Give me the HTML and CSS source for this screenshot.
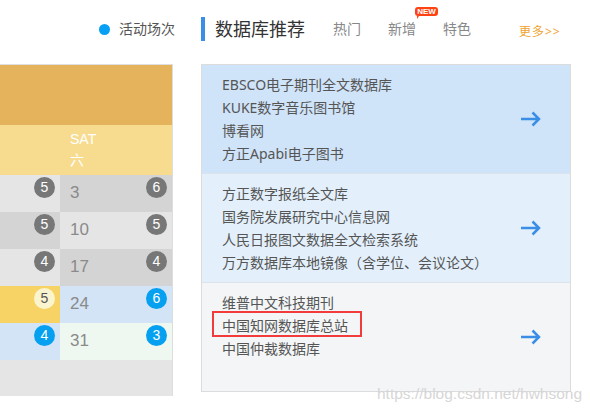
FILE: index.html
```html
<!DOCTYPE html>
<html lang="zh-CN">
<head>
<meta charset="utf-8">
<title>数据库推荐</title>
<link rel="stylesheet" href="styles.css">
</head>
<body>
<div class="page">
  <header class="top">
    <div class="top-left">
      <span class="dot"></span>
      <span class="act">活动场次</span>
    </div>
    <div class="top-right">
      <h2 class="title">数据库推荐</h2>
      <nav class="tabs">
        <a class="tab">热门</a>
        <a class="tab tab-new">新增<span class="badge-new">NEW</span></a>
        <a class="tab">特色</a>
      </nav>
      <a class="more">更多&gt;&gt;</a>
    </div>
  </header>

  <main class="main">
    <section class="cal">
      <div class="cal-head"></div>
      <div class="cal-days">
        <div class="day-cell"></div>
        <div class="day-cell day-name">SAT<br>六</div>
      </div>
      <div class="cal-grid">
        <div class="cell c-light"><span class="b b-gray">5</span></div>
        <div class="cell c-dark"><span class="num">3</span><span class="b b-gray">6</span></div>

        <div class="cell c-dark"><span class="b b-gray">5</span></div>
        <div class="cell c-light"><span class="num">10</span><span class="b b-gray">5</span></div>

        <div class="cell c-light"><span class="b b-gray">4</span></div>
        <div class="cell c-dark"><span class="num">17</span><span class="b b-gray">4</span></div>

        <div class="cell c-yellow"><span class="b b-pale">5</span></div>
        <div class="cell c-blue"><span class="num">24</span><span class="b b-blue">6</span></div>

        <div class="cell c-blue"><span class="b b-blue">4</span></div>
        <div class="cell c-green"><span class="num">31</span><span class="b b-blue">3</span></div>
      </div>
      <div class="cal-foot"></div>
    </section>

    <section class="panel">
      <div class="block block-1">
        <ul class="list">
          <li>EBSCO电子期刊全文数据库</li>
          <li>KUKE数字音乐图书馆</li>
          <li>博看网</li>
          <li>方正Apabi电子图书</li>
        </ul>
        <svg class="arrow" width="20" height="16" viewBox="0 0 20 16"><path d="M0 8H18M11.5 1.5L18 8L11.5 14.5" fill="none" stroke="#3a8ee6" stroke-width="2.5"/></svg>
      </div>
      <div class="block block-2">
        <ul class="list">
          <li>方正数字报纸全文库</li>
          <li>国务院发展研究中心信息网</li>
          <li>人民日报图文数据全文检索系统</li>
          <li>万方数据库本地镜像（含学位、会议论文）</li>
        </ul>
        <svg class="arrow" width="20" height="16" viewBox="0 0 20 16"><path d="M0 8H18M11.5 1.5L18 8L11.5 14.5" fill="none" stroke="#3a8ee6" stroke-width="2.5"/></svg>
      </div>
      <div class="block block-3">
        <ul class="list">
          <li>维普中文科技期刊</li>
          <li><span class="hl">中国知网数据库总站</span></li>
          <li>中国仲裁数据库</li>
        </ul>
        <svg class="arrow" width="20" height="16" viewBox="0 0 20 16"><path d="M0 8H18M11.5 1.5L18 8L11.5 14.5" fill="none" stroke="#3a8ee6" stroke-width="2.5"/></svg>
      </div>
    </section>
  </main>

  <div class="watermark">https://blog.csdn.net/hwhsong</div>
</div>
</body>
</html>
```

FILE: styles.css
```css
* { box-sizing: border-box; }

html, body {
  margin: 0;
  padding: 0;
  background: #fff;
}

body {
  font-family: "Noto Sans", "Noto Sans CJK SC", sans-serif;
  color: #555;
}

.page {
  position: relative;
  width: 594px;
  height: 413px;
  overflow: hidden;
}

/* ---------- header ---------- */
.top {
  display: flex;
  align-items: center;
  height: 58px;
}

.top-left {
  width: 175px;
  display: flex;
  align-items: center;
  justify-content: flex-end;
}

.dot {
  width: 11px;
  height: 11px;
  border-radius: 50%;
  background: #08a0f4;
  margin-right: 9px;
}

.act {
  font-size: 14px;
  line-height: 20px;
  color: #555;
}

.top-right {
  margin-left: 26px;
  display: flex;
  align-items: center;
}

.title {
  margin: 0;
  border-left: 4px solid #3a8ee6;
  padding-left: 10px;
  font-size: 18px;
  line-height: 24px;
  font-weight: normal;
  color: #333;
}

.tabs {
  display: flex;
  align-items: center;
  margin-left: 28px;
  gap: 27px;
}

.tab {
  position: relative;
  font-size: 14px;
  line-height: 20px;
  color: #888;
}

.badge-new {
  position: absolute;
  left: 27px;
  top: -12px;
  width: 23px;
  height: 9px;
  border-radius: 3px;
  background: #ff4214;
  color: #fff;
  font-family: "Liberation Sans", Arial, sans-serif;
  font-weight: bold;
  font-size: 8px;
  line-height: 9px;
  text-align: center;
}

.badge-new::after {
  content: "";
  position: absolute;
  left: 2px;
  bottom: -3px;
  border-left: 2px solid #ff4214;
  border-right: 2px solid transparent;
  border-bottom: 3px solid transparent;
}

.more {
  margin-left: 48px;
  padding-top: 6px;
  font-size: 12px;
  line-height: 16px;
  color: #f0a22e;
  letter-spacing: 1px;
}

/* ---------- main ---------- */
.main {
  display: flex;
  align-items: flex-start;
  margin-top: 6px;
}

/* calendar */
.cal {
  width: 173px;
  border-top: 1px solid #dedede;
  border-right: 1px solid #dedede;
  font-family: "Liberation Sans", Arial, sans-serif;
}

.cal-head {
  height: 60px;
  background: #e5b35c;
}

.cal-days {
  display: grid;
  grid-template-columns: 60px 112px;
  height: 50px;
  background: #f7dc8f;
}

.day-name {
  padding: 4px 10px 0;
  color: #fff;
  font-size: 14px;
  line-height: 21px;
  font-family: "Liberation Sans", "Noto Sans CJK SC", sans-serif;
}

.cal-grid {
  display: grid;
  grid-template-columns: 60px 112px;
  grid-auto-rows: 37px;
}

.cell {
  position: relative;
  padding: 8px 10px 0;
}

.c-light { background: #e5e5e5; }
.c-dark { background: #d4d4d4; }
.c-yellow { background: #f7d264; }
.c-blue { background: #d2e4f5; }
.c-green { background: #eef8f1; }

.num {
  font-size: 17px;
  line-height: 20px;
  color: #8a8a8a;
}

.b {
  position: absolute;
  top: 2px;
  right: 5px;
  width: 21px;
  height: 21px;
  border-radius: 50%;
  font-size: 14px;
  line-height: 21px;
  text-align: center;
  color: #fff;
}

.b-gray { background: #777; }
.b-blue { background: #05a0f0; }
.b-pale { background: #fbf5cf; color: #555; }

.cal-foot {
  height: 36px;
  background: #e5e5e5;
}

/* panel */
.panel {
  margin-left: 28px;
  width: 370px;
  border: 1px solid #dcdcdc;
}

.block {
  height: 109px;
  display: flex;
  justify-content: space-between;
  padding: 8px 29px 0 20px;
  border-bottom: 1px solid #dde3ea;
}

.block-3 { border-bottom: none; height: 108px; }

.block-1 { background: #cfe3f9; }
.block-2 { background: #e3f0fc; }
.block-3 { background: #f3f5f7; }

.list {
  margin: 0;
  padding: 0;
  list-style: none;
  font-size: 14px;
  line-height: 23px;
  color: #555;
}

.arrow {
  align-self: center;
  margin-top: -8px;
}

.hl {
  position: relative;
  display: inline-block;
}

.hl::after {
  content: "";
  position: absolute;
  left: -10px;
  right: -14px;
  top: -3px;
  bottom: 0;
  border: 2px solid #f23c3c;
}

/* watermark */
.watermark {
  position: absolute;
  left: 377px;
  top: 385px;
  font-family: "Liberation Sans", Arial, sans-serif;
  font-size: 15.5px;
  color: #d6d6d6;
}
```
